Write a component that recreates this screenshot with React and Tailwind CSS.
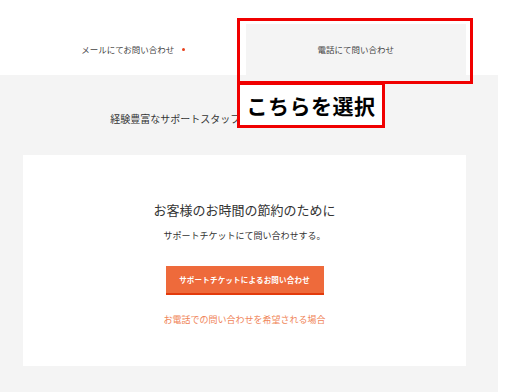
const jp = { fontFamily: '"Noto Sans CJK JP", "Noto Sans", sans-serif' };

export default function App() {
  return (
    <div className="relative w-[530px] h-[392px] bg-white overflow-hidden" style={jp}>
      <div className="w-[498px]">
        {/* Tabs */}
        <div className="flex h-[75px] pt-[24px] px-[23px] pr-[32px]">
          <div className="flex-1 flex items-center justify-center gap-[8px] text-[8.5px] text-[#444]">
            <span>メールにてお問い合わせ</span>
            <span className="w-[3px] h-[3px] rounded-full bg-[#e8401c]" />
          </div>
          <div className="flex-1 flex items-center justify-center bg-[#f4f4f4] text-[8.5px] text-[#444] ml-[2px]">
            電話にて問い合わせ
          </div>
        </div>

        {/* Content */}
        <div className="bg-[#f4f4f4] h-[317px] pt-[37px]">
          <p className="w-[443px] ml-[23px] text-center text-[10px] leading-[14px] text-[#333]">
            経験豊富なサポートスタッフが、丁寧にご対応いたします。
          </p>
          <div className="w-[443px] ml-[23px] mt-[29px] h-[211px] bg-white flex flex-col items-center pt-[46px]">
            <h2 className="text-[13px] leading-[18px] text-[#333]">お客様のお時間の節約のために</h2>
            <p className="mt-[10px] text-[9px] leading-[13px] text-[#333]">サポートチケットにて問い合わせする。</p>
            <button className="mt-[24px] w-[158px] h-[29px] bg-[#ee6a3b] border-b-2 border-[#e33a0c] text-white font-bold text-[7.5px] tracking-[0.2px]">
              サポートチケットによるお問い合わせ
            </button>
            <a className="mt-[18px] text-[9px] leading-[13px] text-[#f08457]">お電話での問い合わせを希望される場合</a>
          </div>
        </div>
      </div>

      {/* Annotation overlay */}
      <div className="absolute left-[237px] top-[18px] w-[236px] h-[66px] border-[3px] border-[#f00000]" />
      <div className="absolute left-[237px] top-[82px] w-[148px] h-[46px] border-[3px] border-[#f00000] bg-white flex items-center justify-center">
        <span className="text-[21px] font-bold text-black leading-none tracking-[0.5px]">こちらを選択</span>
      </div>
    </div>
  );
}
